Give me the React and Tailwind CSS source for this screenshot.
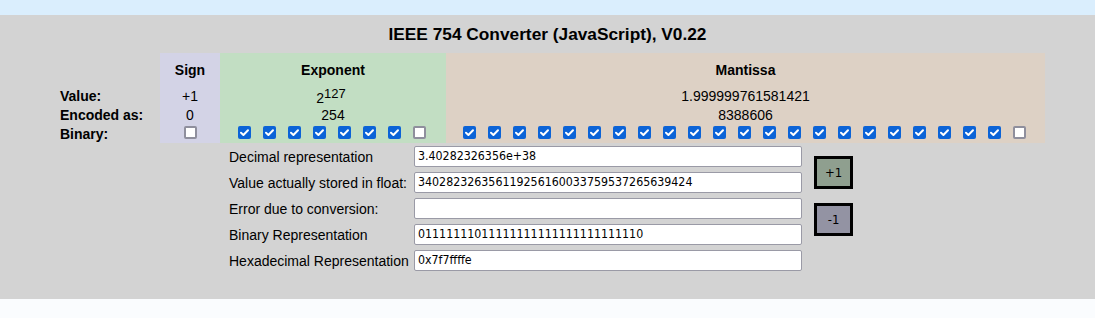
import React from "react";

function Box({ checked }) {
  if (checked) {
    return (
      <span className="inline-flex w-[13px] h-[13px] rounded-[2px] bg-[#0b63d7] items-center justify-center shrink-0">
        <svg width="13" height="13" viewBox="0 0 13 13">
          <path d="M3 6.8 L5.4 9 L10 4.2" fill="none" stroke="#fff" strokeWidth="2" strokeLinecap="round" strokeLinejoin="round" />
        </svg>
      </span>
    );
  }
  return <span className="inline-block w-[13px] h-[13px] rounded-[2px] border-2 border-[#8f8f9d] bg-white shrink-0" />;
}

const expBits = [1, 1, 1, 1, 1, 1, 1, 0];
const manBits = Array.from({ length: 23 }, (_, i) => (i === 22 ? 0 : 1));

const rows = [
  ["Decimal representation", "3.40282326356e+38"],
  ["Value actually stored in float:", "340282326356119256160033759537265639424"],
  ["Error due to conversion:", ""],
  ["Binary Representation", "01111111011111111111111111111110"],
  ["Hexadecimal Representation", "0x7f7ffffe"],
];

export default function App() {
  return (
    <div className="w-[1095px] h-[318px] bg-[#fafcfe] text-black font-['Liberation_Sans',Arial,sans-serif]">
      <div className="h-[15px] bg-[#daeefd]" />
      <div className="bg-[#d3d3d3] pt-[9px] pb-[28px]">
        <h1 className="text-center font-bold text-[17.3px] leading-[20px]">
          IEEE 754 Converter (JavaScript), V0.22
        </h1>
        <div className="mt-[9px] ml-[60px] flex text-[14px] leading-[16px]">
          <div className="w-[100px] flex flex-col font-bold">
            <div className="h-[33px]" />
            <div className="h-[19px] flex items-center">Value:</div>
            <div className="h-[20px] flex items-center">Encoded as:</div>
            <div className="h-[18px] flex items-center">Binary:</div>
          </div>
          <div className="w-[60px] flex flex-col bg-[#d3d3e6] items-center">
            <div className="h-[33px] flex items-center font-bold">Sign</div>
            <div className="h-[19px] flex items-center">+1</div>
            <div className="h-[20px] flex items-center">0</div>
            <div className="h-[18px] flex items-start pt-[1px]">
              <Box checked={false} />
            </div>
          </div>
          <div className="w-[226px] flex flex-col bg-[#c2dec3] items-center">
            <div className="h-[33px] flex items-center font-bold">Exponent</div>
            <div className="h-[19px] flex items-center pr-[4px]">
              <span className="relative top-[2px]">2</span>
              <span className="relative -top-[2px] text-[13px]">127</span>
            </div>
            <div className="h-[20px] flex items-center">254</div>
            <div className="h-[18px] flex items-start pt-[1px] gap-[12px] pr-[2px]">
              {expBits.map((b, i) => (
                <Box key={i} checked={!!b} />
              ))}
            </div>
          </div>
          <div className="w-[599px] flex flex-col bg-[#ddd1c5] items-center">
            <div className="h-[33px] flex items-center font-bold">Mantissa</div>
            <div className="h-[19px] flex items-center">1.999999761581421</div>
            <div className="h-[20px] flex items-center">8388606</div>
            <div className="h-[18px] flex items-start pt-[1px] gap-[12px] pr-[2px]">
              {manBits.map((b, i) => (
                <Box key={i} checked={!!b} />
              ))}
            </div>
          </div>
        </div>
        <div className="mt-[3px] ml-[229px] flex">
          <div className="flex flex-col gap-[5px]">
            {rows.map(([label, value]) => (
              <div key={label} className="flex items-center h-[21px]">
                <div className="w-[185px] text-[14px] leading-[16px] whitespace-nowrap">{label}</div>
                <div className="w-[388px] h-[21px] bg-white border border-[#9a9aa6] rounded-[2px] pl-[3px] flex items-center text-[12.3px] font-['DejaVu_Sans_Condensed','DejaVu_Sans',sans-serif] font-stretch-condensed whitespace-nowrap overflow-hidden">
                  {value}
                </div>
              </div>
            ))}
          </div>
          <div className="ml-[12px] pt-[10px] flex flex-col gap-[14px]">
            <button className="w-[39px] h-[33px] border-[3px] border-black bg-[#8f9f8f] text-[13px] font-['DejaVu_Sans_Condensed','DejaVu_Sans',sans-serif] font-stretch-condensed flex items-center justify-center">
              +1
            </button>
            <button className="w-[39px] h-[33px] border-[3px] border-black bg-[#9393a3] text-[13px] font-['DejaVu_Sans_Condensed','DejaVu_Sans',sans-serif] font-stretch-condensed flex items-center justify-center">
              -1
            </button>
          </div>
        </div>
      </div>
    </div>
  );
}
